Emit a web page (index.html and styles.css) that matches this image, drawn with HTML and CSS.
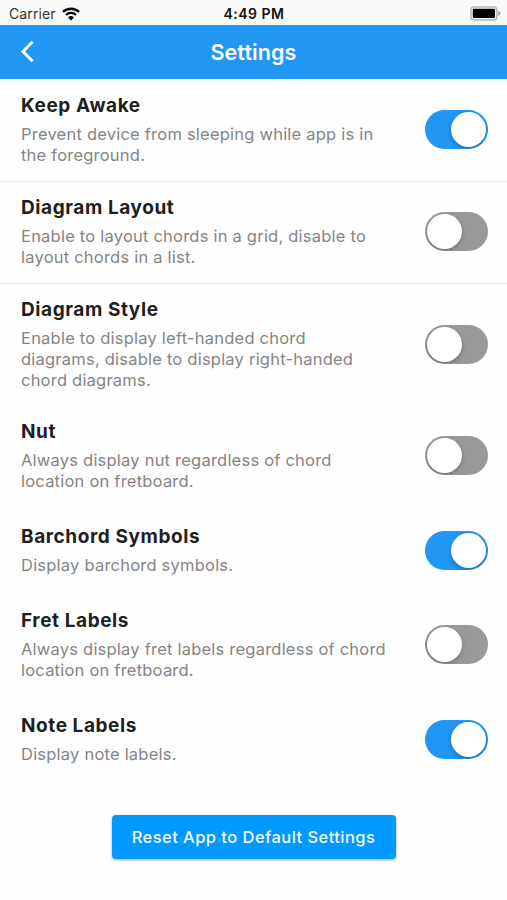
FILE: index.html
```html
<!DOCTYPE html>
<html lang="en">
<head>
    <meta charset="UTF-8">
    <meta name="viewport" content="width=device-width, initial-scale=1.0">
    <title>Settings</title>
    <link rel="stylesheet" href="styles.css">
</head>
<body>
    <!-- Status bar -->
    <div class="status-bar">
        <div class="carrier">
            <span>Carrier</span>
            <svg class="wifi" viewBox="0 0 18 14" width="18" height="14">
                <path d="M1 4.9A11.6 11.6 0 0 1 17 4.9" fill="none" stroke="#000" stroke-width="2.4"/>
                <path d="M3.9 8A7.4 7.4 0 0 1 14.1 8" fill="none" stroke="#000" stroke-width="2.2"/>
                <path d="M6.1 10.5A4.2 4.2 0 0 1 11.9 10.5L9 13.5Z"/>
            </svg>
        </div>
        <div class="time">4:49 PM</div>
        <svg class="battery" viewBox="0 0 31 15" width="31" height="15">
            <rect x="0.9" y="0.9" width="26" height="13" rx="3.2" fill="#fafafa" stroke="#b4b4b4" stroke-width="1.5"/>
            <rect x="2.8" y="2.8" width="22.2" height="9.2" rx="1"/>
            <path d="M28 4.8Q30.6 6 30.6 7.4Q30.6 8.8 28 10Z" fill="#a8a8a8"/>
        </svg>
    </div>

    <!-- App bar -->
    <header class="app-bar">
        <svg class="back" viewBox="0 0 14 24" width="14" height="24">
            <path d="M12.6 1.7L3 11.5L12.6 21.3" fill="none" stroke="#fff" stroke-width="3"/>
        </svg>
        <h1>Settings</h1>
    </header>

    <main>
        <div class="setting divider">
            <div class="text">
                <h2>Keep Awake</h2>
                <p>Prevent device from sleeping while app is in the foreground.</p>
            </div>
            <div class="toggle on"></div>
        </div>
        <div class="setting divider">
            <div class="text">
                <h2>Diagram Layout</h2>
                <p>Enable to layout chords in a grid, disable to layout chords in a list.</p>
            </div>
            <div class="toggle"></div>
        </div>
        <div class="setting">
            <div class="text">
                <h2>Diagram Style</h2>
                <p>Enable to display left-handed chord diagrams, disable to display right-handed chord diagrams.</p>
            </div>
            <div class="toggle"></div>
        </div>
        <div class="group">
            <div class="setting">
                <div class="text">
                    <h2>Nut</h2>
                    <p>Always display nut regardless of chord location on fretboard.</p>
                </div>
                <div class="toggle"></div>
            </div>
            <div class="setting">
                <div class="text">
                    <h2>Barchord Symbols</h2>
                    <p>Display barchord symbols.</p>
                </div>
                <div class="toggle on"></div>
            </div>
            <div class="setting">
                <div class="text">
                    <h2>Fret Labels</h2>
                    <p>Always display fret labels regardless of chord location on fretboard.</p>
                </div>
                <div class="toggle"></div>
            </div>
            <div class="setting">
                <div class="text">
                    <h2>Note Labels</h2>
                    <p>Display note labels.</p>
                </div>
                <div class="toggle on"></div>
            </div>
        </div>
        <button class="reset">Reset App to Default Settings</button>
    </main>
</body>
</html>
```
FILE: styles.css
```css
/* General Styles */
* {
    box-sizing: border-box;
}

body {
    font-family: Inter, "Liberation Sans", sans-serif;
    margin: 0;
    min-height: 100vh;
    background: #fefefe;
    color: #1f1f1f;
}

h1, h2, p {
    margin: 0;
}

/* Status bar */
.status-bar {
    display: grid;
    grid-template-columns: 1fr auto 1fr;
    align-items: center;
    height: 25px;
    padding: 2px 6px 0 9px;
    background: #fafafa;
    font-size: 14px;
    line-height: 23px;
}

.carrier {
    display: flex;
    align-items: center;
    gap: 6px;
    color: #333;
    letter-spacing: 0.1px;
}

.time {
    margin-right: 2px;
    color: #111;
    font-weight: 600;
    letter-spacing: 0.5px;
}

.battery {
    justify-self: end;
}

/* App bar */
.app-bar {
    display: grid;
    grid-template-columns: 1fr auto 1fr;
    align-items: center;
    height: 54px;
    padding: 0 20px;
    background: #2296f3;
    color: white;
}

.app-bar h1 {
    font-size: 21.5px;
    font-weight: 600;
    line-height: 28px;
    letter-spacing: 0.1px;
}

/* Settings */
main {
    padding-top: 0.5px;
}

.setting {
    display: flex;
    justify-content: space-between;
    align-items: center;
    padding: 14px 19px 15px 21px;
}

.divider {
    border-bottom: 1px solid #ebebeb;
}

.group {
    display: grid;
    gap: 4px;
}

.text {
    width: 366px;
}

h2 {
    margin-bottom: 6px;
    font-size: 19px;
    font-weight: 700;
    line-height: 24px;
    letter-spacing: 0.58px;
}

p {
    color: #858585;
    font-size: 16.5px;
    line-height: 21px;
    letter-spacing: 0.22px;
}

/* Toggle */
.toggle {
    display: flex;
    flex-shrink: 0;
    width: 63px;
    height: 39px;
    padding: 2px;
    border-radius: 20px;
    background: #999;
    overflow: hidden;
}

.toggle::before {
    content: "";
    width: 35px;
    height: 35px;
    border-radius: 50%;
    background: white;
    box-shadow: 0 2px 4px rgba(0, 0, 0, 0.25);
}

.toggle.on {
    justify-content: flex-end;
    background: #2296f3;
}

/* Reset button */
.reset {
    display: block;
    width: 284px;
    height: 44px;
    margin: 35px auto 0;
    padding: 0;
    border: none;
    border-radius: 4px;
    background: #0099ff;
    color: #f4faff;
    font-family: inherit;
    font-size: 16.5px;
    font-weight: 500;
    letter-spacing: 0.45px;
    box-shadow: 0 1px 3px rgba(0, 0, 0, 0.35);
}
```
